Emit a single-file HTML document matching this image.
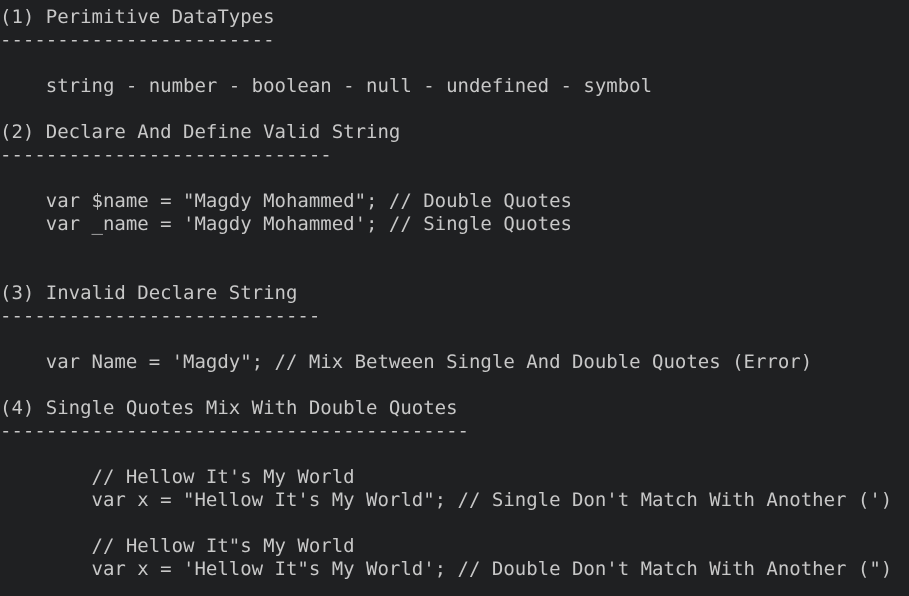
<!DOCTYPE html>
<html><head><style>
html,body{margin:0;padding:0;background:#1f2022;width:909px;height:596px;overflow:hidden}
pre{margin:0;padding:6px 0 0 0;font-family:"DejaVu Sans Mono","Liberation Mono",monospace;font-size:19px;line-height:23px;color:#c8c8c8;white-space:pre}
</style></head><body><pre>(1) Perimitive DataTypes
------------------------

    string - number - boolean - null - undefined - symbol

(2) Declare And Define Valid String
-----------------------------

    var $name = "Magdy Mohammed"; // Double Quotes
    var _name = 'Magdy Mohammed'; // Single Quotes


(3) Invalid Declare String
----------------------------

    var Name = 'Magdy"; // Mix Between Single And Double Quotes (Error)

(4) Single Quotes Mix With Double Quotes
-----------------------------------------

        // Hellow It's My World
        var x = "Hellow It's My World"; // Single Don't Match With Another (')

        // Hellow It"s My World
        var x = 'Hellow It"s My World'; // Double Don't Match With Another (")
</pre></body></html>
